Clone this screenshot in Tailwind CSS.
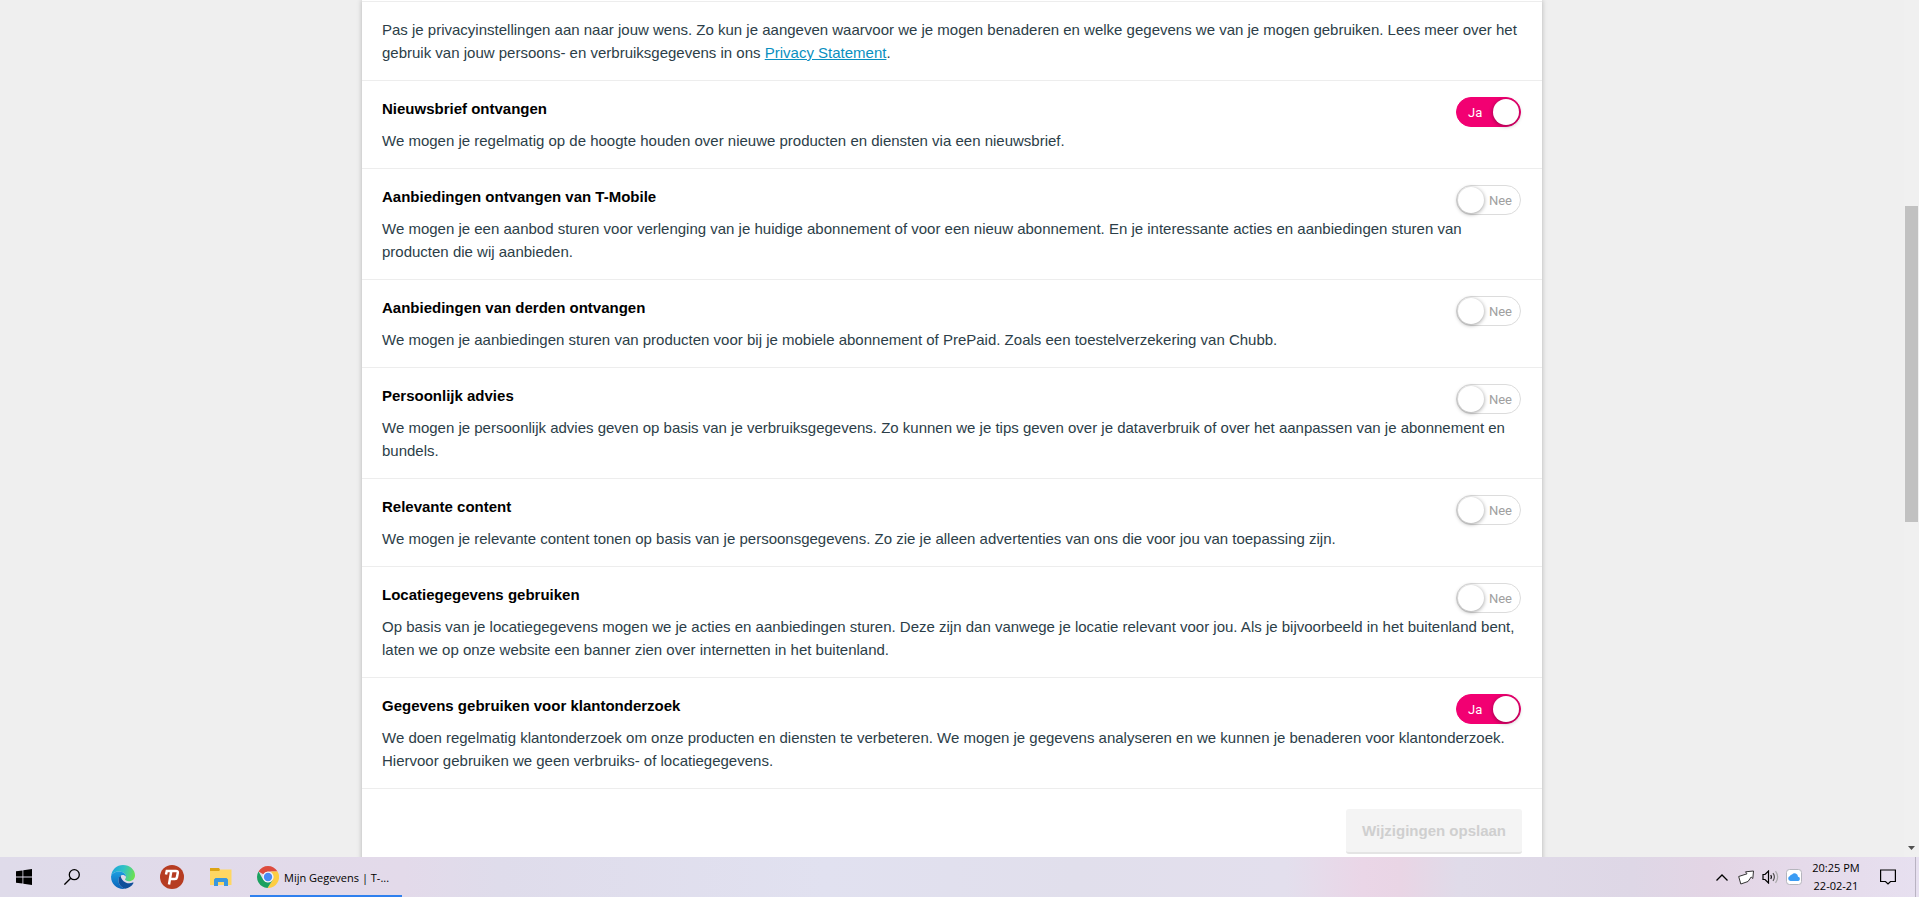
<!DOCTYPE html>
<html lang="nl">
  <head>
    <meta charset="UTF-8" />
    <meta name="viewport" content="width=device-width, initial-scale=1.0" />
    <title>Mijn Gegevens | T-Mobile</title>
    <script src="https://cdn.jsdelivr.net/npm/@tailwindcss/browser@4"></script>
  </head>
  <body class="flex h-screen flex-col overflow-hidden bg-[#efefef] font-['Liberation_Sans',Arial,sans-serif] text-[15px] leading-[23px] text-[#2c3e48]">
    <!-- Page -->
    <div class="flex min-h-0 flex-1">
      <main class="min-w-0 flex-1 overflow-hidden">
        <div class="mx-auto min-h-full max-w-[1180px] bg-white pt-px shadow-[0_0_5px_rgba(0,0,0,0.25)]">
          <p class="border-y border-[#ededed] px-5 py-4">
            Pas je privacyinstellingen aan naar jouw wens. Zo kun je aangeven waarvoor we je mogen benaderen en welke gegevens we van je mogen gebruiken. Lees meer over het gebruik van jouw persoons- en verbruiksgegevens in ons
            <a href="#" class="text-[#0a8fc0] underline">Privacy Statement</a>.
          </p>
          <form id="settings"></form>
          <div class="flex justify-end px-5 py-5">
            <button form="settings" disabled class="h-[45px] rounded-[3px] border-b-2 border-[#e4e4e4] bg-[#f4f4f4] px-4 font-bold text-[#cfcfcf]">Wijzigingen opslaan</button>
          </div>
        </div>
      </main>
      <!-- Scrollbar -->
      <div class="flex w-[15px] flex-col bg-[#f0f0f0] px-px">
        <div class="flex-[206]"></div>
        <div class="flex-[316] bg-[#c1c1c1]"></div>
        <div class="flex-[318]"></div>
        <svg class="h-[17px] w-[13px]" viewBox="0 0 13 17"><path d="M3 6h7L6.500 10z" fill="#505050" /></svg>
      </div>
    </div>

    <!-- Taskbar -->
    <footer class="flex h-10 shrink-0 items-center bg-[linear-gradient(90deg,#dfdbea_0%,#e3daea_21%,#dfdceb_26%,#e1e1f0_43%,#e1dfec_56%,#e3dfed_67%,#ead6e7_71%,#e9d5e5_73%,#e0dbe9_76%,#ded7e6_85%,#e3d5e5_89%,#e5daea_94%,#e7e0f0_100%)] font-['Open_Sans','Noto_Sans',sans-serif] text-[11px] text-black">
      <button aria-label="Start" class="flex h-10 w-12 items-center justify-center">
        <svg class="size-4" viewBox="0 0 16 16"><path d="M0 2.300 6.500 1.400V7.500H0zM7.300 1.200 16 0V7.500H7.300zM0 8.400H6.500V14.600L0 13.700zM7.300 8.400H16V16L7.300 14.800z" /></svg>
      </button>
      <button aria-label="Zoeken" class="flex h-10 w-12 items-center justify-center">
        <svg class="size-4" viewBox="0 0 16 16" fill="none" stroke="#000" stroke-width="1.300"><circle cx="10.300" cy="5.700" r="5" /><path d="M6.700 9.300.4 15.600" /></svg>
      </button>
      <button aria-label="Edge" class="ml-[2px] flex h-10 w-[49px] items-center justify-center">
        <svg class="size-6" viewBox="0 0 24 24">
          <defs>
            <linearGradient id="edgeTop" x1="0" y1=".4" x2="1" y2=".6"><stop offset="0" stop-color="#1ea5dc" /><stop offset=".5" stop-color="#32c3c3" /><stop offset="1" stop-color="#6ee24b" /></linearGradient>
            <linearGradient id="edgeSide" x1="0" y1="0" x2="0" y2="1"><stop offset="0" stop-color="#1b9de0" /><stop offset="1" stop-color="#0b62b8" /></linearGradient>
          </defs>
          <path d="M.1 11C.8 4.500 5.800 0 12 0c7 0 12 4.900 12 10.200 0 3.700-2.700 6-6 6-2.300 0-4-.8-4-1.600 0-.7 1-1 1-2.800 0-3-3.300-5.200-7-5.200C4.300 6.600 1.200 8.300.1 11z" fill="url(#edgeTop)" />
          <path d="M.1 11C1.200 8.300 4.300 6.600 8 6.600c3.700 0 7 2.200 7 5.200-.8-1.200-2-1.800-3.300-1.800-2.300 0-4.200 2.400-4.200 5.600 0 4 3 7.400 6.700 8.200-7.700 1.200-14.700-4.800-14.100-12.800z" fill="url(#edgeSide)" />
          <path d="M9.500 10.500c-1.300 1-2 2.900-2 5.100 0 4 3 7.400 6.700 8.200 3.600-.5 6.700-2.600 8.300-5.700.3-.6-.1-.9-.7-.6-5.200 2.300-11.200-.7-12.300-7z" fill="#11509a" />
        </svg>
      </button>
      <button aria-label="Psiphon" class="flex h-10 w-[49px] items-center justify-center">
        <svg class="size-6" viewBox="0 0 24 24"><circle cx="12" cy="12" r="12" fill="#b63c22" /><path d="M6 9.500 6.800 6H16q2 0 1.800 1.800l-.9 4.700q-.3 1.500-2 1.500h-4M11.300 6 9 19.500" fill="none" stroke="#fff" stroke-width="2.500" /></svg>
      </button>
      <button aria-label="Verkenner" class="flex h-10 w-[49px] items-center justify-center">
        <svg class="h-[18px] w-[22px]" viewBox="0 0 22 18"><path d="M0 0h9l1 1.500h11.500V17H0z" fill="#ffd762" /><path d="M0 0h9l1 2-1 1H0z" fill="#dda414" /><path d="M4 18v-6.500l1.500-1.500h11l1.500 1.500V18h-4v-4H8v4z" fill="#3a97dd" /></svg>
      </button>
      <button class="ml-[5px] flex h-10 w-[152px] items-center gap-[5px] border-b-2 border-[#2f80ee] px-[7px] pt-[2px]">
        <svg class="size-[22px] shrink-0" viewBox="0 0 22 22">
          <path d="M1.500 5.500A11 11 0 0 1 20.500 5.500H11A5.500 5.500 0 0 0 6.200 8.300z" fill="#dd4b3e" />
          <path d="M20.500 5.500A11 11 0 0 1 10.500 22L15.800 13.800A5.500 5.500 0 0 0 14.500 6.500L14 5.500z" fill="#fdcd42" />
          <path d="M1.500 5.500A11 11 0 0 0 10.500 22L15.800 13.800A5.500 5.500 0 0 1 6.200 13.800z" fill="#1ba160" />
          <circle cx="11" cy="11" r="5.300" fill="#f5f5f5" /><circle cx="11" cy="11" r="4.200" fill="#4a8af5" />
        </svg>
        <span class="whitespace-nowrap">Mijn Gegevens | T-...</span>
      </button>
      <div class="ml-auto flex h-full items-center">
        <button aria-label="Verborgen pictogrammen" class="flex w-6 justify-center"><svg class="h-[7px] w-3" viewBox="0 0 12 7" fill="none" stroke="#000" stroke-width="1.300"><path d="M.5 6.500 6 1l5.500 5.500" /></svg></button>
        <button aria-label="Netwerk" class="flex w-6 justify-center"><svg class="h-[15px] w-4" viewBox="0 0 16 15" fill="#fff" stroke="#333" stroke-width="1" stroke-linejoin="round"><path d="M.7 6.500 9 3.800 7.500 1.800l8-.8-.7 7.500-1.600-1.500L10 11.500 2.800 14z" /></svg></button>
        <button aria-label="Volume" class="flex w-6 justify-center"><svg class="h-[14px] w-[17px]" viewBox="0 0 17 14" fill="none" stroke="#000" stroke-width="1.200"><path d="M1 4.500h2l3.500-3.500v12L3 9.500H1z" /><path d="M8.800 5q1.300 2 0 4" /><path d="M11 3.200q2.800 3.800 0 7.600" stroke="#555" /><path d="M13.500 1.200q4.300 5.800 0 11.600" stroke="#aaa" /></svg></button>
        <button aria-label="iCloud" class="flex w-6 justify-center"><svg class="size-4" viewBox="0 0 16 16"><rect x=".5" y=".5" width="15" height="15" rx="3" fill="#fff" stroke="#b5b5bd" /><path d="M4.500 12a2.500 2.500 0 0 1-.5-4.900A2 2 0 0 1 6 5.500a3.400 3.400 0 0 1 6 2.200 2.200 2.200 0 0 1 .3 4.300z" fill="#3b9cf4" /></svg></button>
        <time class="flex w-[60px] flex-col text-center leading-[18px]"><span>20:25 PM</span><span>22-02-21</span></time>
        <button aria-label="Meldingen" class="mr-[6px] flex h-full w-[43px] items-center justify-center"><svg class="size-4" viewBox="0 0 16 16" fill="none" stroke="#000" stroke-width="1.200"><path d="M.6 1h14.800v11.500H10.500L8 15l-2.500-2.500H.6z" /></svg></button>
        <div class="h-full w-1 border-l border-[#b9b3c2]"></div>
      </div>
    </footer>

    <script>
      const settings = [
        {
          title: "Nieuwsbrief ontvangen",
          text: "We mogen je regelmatig op de hoogte houden over nieuwe producten en diensten via een nieuwsbrief.",
          on: true,
        },
        {
          title: "Aanbiedingen ontvangen van T-Mobile",
          text: "We mogen je een aanbod sturen voor verlenging van je huidige abonnement of voor een nieuw abonnement. En je interessante acties en aanbiedingen sturen van producten die wij aanbieden.",
          on: false,
        },
        {
          title: "Aanbiedingen van derden ontvangen",
          text: "We mogen je aanbiedingen sturen van producten voor bij je mobiele abonnement of PrePaid. Zoals een toestelverzekering van Chubb.",
          on: false,
        },
        {
          title: "Persoonlijk advies",
          text: "We mogen je persoonlijk advies geven op basis van je verbruiksgegevens. Zo kunnen we je tips geven over je dataverbruik of over het aanpassen van je abonnement en bundels.",
          on: false,
        },
        {
          title: "Relevante content",
          text: "We mogen je relevante content tonen op basis van je persoonsgegevens. Zo zie je alleen advertenties van ons die voor jou van toepassing zijn.",
          on: false,
        },
        {
          title: "Locatiegegevens gebruiken",
          text: "Op basis van je locatiegegevens mogen we je acties en aanbiedingen sturen. Deze zijn dan vanwege je locatie relevant voor jou. Als je bijvoorbeeld in het buitenland bent, laten we op onze website een banner zien over internetten in het buitenland.",
          on: false,
        },
        {
          title: "Gegevens gebruiken voor klantonderzoek",
          text: "We doen regelmatig klantonderzoek om onze producten en diensten te verbeteren. We mogen je gegevens analyseren en we kunnen je benaderen voor klantonderzoek. Hiervoor gebruiken we geen verbruiks- of locatiegegevens.",
          on: true,
        },
      ];

      // Render one row with a switch for each setting
      document.getElementById("settings").innerHTML = settings
        .map(
          (item, i) => `
          <section class="border-b border-[#ededed] py-4 pl-5 pr-[21px]">
            <div class="flex h-8 items-start justify-between">
              <label for="setting${i}" class="font-bold leading-6 text-black">${item.title}</label>
              <label class="group flex h-[30px] w-[65px] cursor-pointer items-center justify-between rounded-full border border-[#dcdcdc] bg-white px-px font-['Roboto',sans-serif] text-[13px] text-[#a0a0a0] has-checked:flex-row-reverse has-checked:border-[#f20072] has-checked:bg-[#f20072] has-checked:text-white">
                <input id="setting${i}" type="checkbox" class="sr-only" ${item.on ? "checked" : ""} />
                <span class="size-[26px] rounded-full bg-white shadow-[0_1px_4px_rgba(0,0,0,0.4)]"></span>
                <span class="hidden pl-[10px] group-has-checked:block">Ja</span>
                <span class="pr-[7px] group-has-checked:hidden">Nee</span>
              </label>
            </div>
            <p>${item.text}</p>
          </section>`
        )
        .join("");
    </script>
  </body>
</html>
